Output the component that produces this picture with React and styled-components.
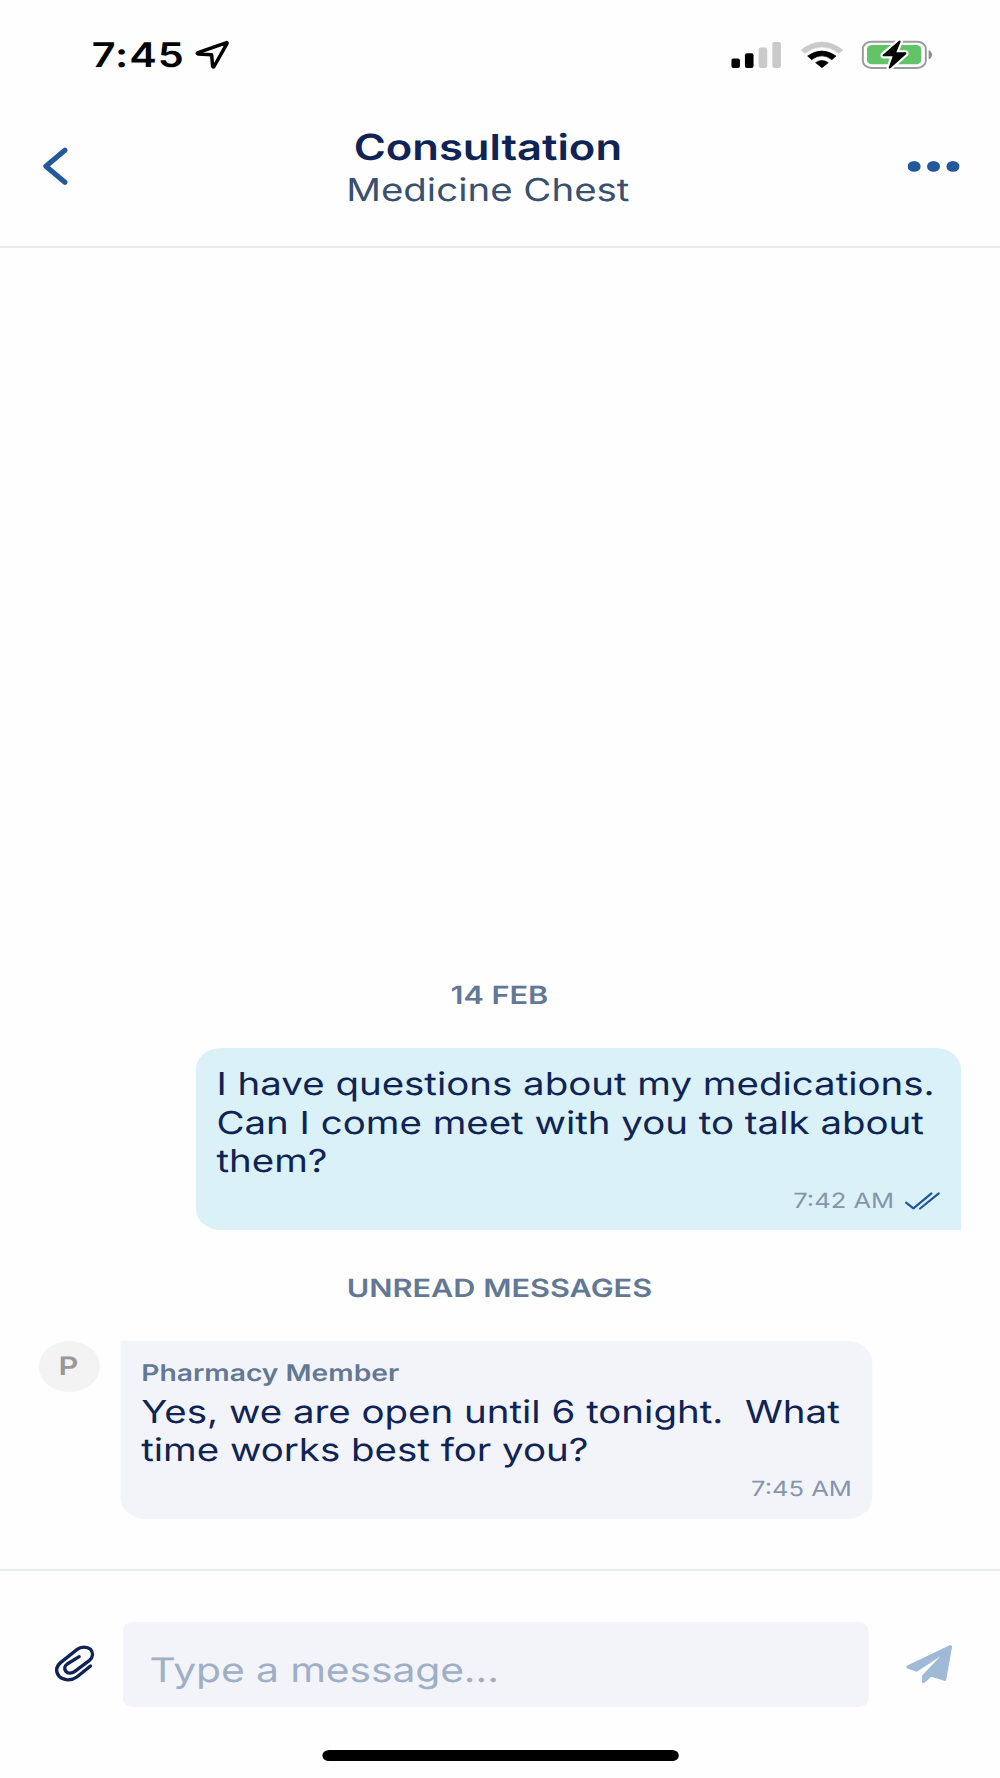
import React from "react";
import styled, { createGlobalStyle } from "styled-components";

/* The screen is laid out on an 822px wide phone canvas and widened to fill the 1000px viewport. */
const CANVAS = 822;
const STRETCH = 1000 / CANVAS;

const color = {
  page: "#fefefe",
  navy: "#0f2454",
  slate: "#3a506f",
  muted: "#627894",
  faint: "#8595ae",
  blue: "#23599b",
  line: "#e8edf5",
  field: "#f3f4f9",
  sent: "#daf1f7",
};

const Global = createGlobalStyle`
  *, *::before, *::after { box-sizing: border-box; }
  html, body { margin: 0; padding: 0; background: ${color.page}; overflow: hidden; }
`;

const Viewport = styled.div`
  width: 1000px;
  height: 1778px;
  overflow: hidden;
  background: ${color.page};
`;

const Screen = styled.div`
  display: flex;
  flex-direction: column;
  width: ${CANVAS}px;
  height: 1778px;
  transform: scaleX(${STRETCH});
  transform-origin: 0 0;
  font-family: Inter, "Liberation Sans", sans-serif;
  text-rendering: geometricPrecision;
  color: ${color.navy};
`;

const StatusBar = styled.div`
  display: flex;
  align-items: center;
  justify-content: space-between;
  height: 110px;
  padding: 0 55.5px 0 75.4px;
  color: #000;
`;

const StatusGroup = styled.div`
  display: flex;
  align-items: center;
  gap: ${(p) => p.$gap}px;
`;

const Clock = styled.span`
  padding-top: 2px;
  font-size: 34px;
  font-weight: 600;
  line-height: 40px;
  letter-spacing: 0.75px;
`;

const Glyph = styled.svg`
  display: block;
  flex: none;
  width: ${(p) => p.$w / STRETCH}px;
  height: ${(p) => p.$h}px;
`;

const Header = styled.header`
  display: grid;
  grid-template-columns: 60px 1fr 80px;
  align-items: start;
  height: 138px;
  padding: 16px 33px 0 35px;
  border-bottom: 2px solid ${color.line};
`;

const IconButton = styled.button`
  display: flex;
  align-items: center;
  justify-content: ${(p) => p.$align || "center"};
  height: ${(p) => p.$h}px;
  padding: 0;
  border: 0;
  background: none;
`;

const Titles = styled.div`
  display: flex;
  flex-direction: column;
  align-items: center;
  margin-right: 2px;
`;

const Title = styled.h1`
  margin: 0;
  font-size: 35.8px;
  font-weight: 600;
  line-height: 42.6px;
`;

const Subtitle = styled.div`
  font-size: 31.6px;
  line-height: 42.6px;
  color: ${color.slate};
`;

const Chat = styled.main`
  flex: 1;
  display: flex;
  flex-direction: column;
  justify-content: flex-end;
  padding: 0 31.8px 50px 32px;
`;

const Divider = styled.div`
  align-self: center;
  margin: ${(p) => p.$top}px 1.2px ${(p) => p.$bottom}px 0;
  font-size: 25.2px;
  font-weight: 600;
  line-height: 30px;
  color: ${color.muted};
`;

const IncomingRow = styled.div`
  display: flex;
  align-items: flex-start;
  gap: 17.1px;
`;

const Avatar = styled.div`
  display: flex;
  align-items: center;
  justify-content: center;
  flex: none;
  width: 50.4px;
  height: 50.4px;
  padding: 0 2px 1px 0;
  border-radius: 50%;
  background: #f3f3f3;
  font-size: 25.3px;
  font-weight: 600;
  color: #989898;
`;

const Bubble = styled.article`
  display: flex;
  flex-direction: column;
  align-self: ${(p) => (p.$sent ? "flex-end" : "auto")};
  width: ${(p) => (p.$sent ? 628.9 : 618)}px;
  height: ${(p) => (p.$sent ? 182.3 : 177.7)}px;
  padding: 17.6px 17.2px 0 16.6px;
  border-radius: ${(p) => (p.$sent ? "21px 21px 0 21px" : "0 21px 21px 21px")};
  background: ${(p) => (p.$sent ? color.sent : color.field)};
`;

const Sender = styled.div`
  margin-bottom: 6px;
  font-size: 23.2px;
  font-weight: 600;
  line-height: 28px;
  color: ${color.muted};
`;

const Message = styled.p`
  margin: 0;
  font-size: 31.6px;
  line-height: 38.4px;
  white-space: pre;
`;

const Meta = styled.div`
  display: flex;
  align-items: center;
  justify-content: flex-end;
  gap: 9.3px;
  margin-top: ${(p) => p.$top}px;
  font-size: 21px;
  line-height: 26px;
  color: ${color.faint};
`;

const Composer = styled.footer`
  display: grid;
  grid-template-columns: 79.8px 613.2px 1fr;
  align-items: start;
  height: 181px;
  padding: 50.6px 10px 0 21.5px;
  border-top: 2px solid ${color.line};
`;

const Field = styled.input`
  width: 613.2px;
  height: 85.2px;
  padding: 13px 22px 0 21.6px;
  border: 0;
  border-radius: 8.5px;
  outline: none;
  background: ${color.field};
  font: 400 33.6px Inter, "Liberation Sans", sans-serif;
  letter-spacing: -0.1px;
  text-rendering: geometricPrecision;
  color: ${color.navy};
  &::placeholder { color: #9eafc6; opacity: 1; }
`;

const HomeBar = styled.div`
  align-self: center;
  width: 292.8px;
  height: 11px;
  margin: 0 0 17px 0.6px;
  border-radius: 5.5px;
  background: #000;
`;

function LocationIcon() {
  return (
    <Glyph $w={36} $h={30} viewBox="376 62 108 90" preserveAspectRatio="none">
      <path d="M472 70 L386 100 Q381 102 386 104 L427 106 L430 141 Q432 145 435 140 L473 73 Q474 69 472 70Z" fill="none" stroke="#000" strokeWidth="10.5" strokeLinejoin="round" />
    </Glyph>
  );
}

function SignalIcon() {
  return (
    <Glyph $w={50} $h={28} viewBox="731.5 40.5 50 28" preserveAspectRatio="none">
      <rect x="731.7" y="58" width="8.6" height="9.6" rx="2" />
      <rect x="745.3" y="52.7" width="8.6" height="14.9" rx="2" />
      <rect x="759" y="47" width="8.6" height="20.6" rx="2" fill="#cacaca" />
      <rect x="772.7" y="41.5" width="8.6" height="26.1" rx="2" fill="#cacaca" />
    </Glyph>
  );
}

function WifiIcon() {
  return (
    <Glyph $w={44} $h={28} viewBox="268 61 132 84" preserveAspectRatio="none">
      <path d="M273 88 Q336 40 399 88 L387 98 Q336 60 285 98Z" fill="#cacaca" stroke="#cacaca" strokeWidth="1.5" strokeLinejoin="round" />
      <path d="M293 106 Q336 76 378 106 L366 117 Q336 94 305 117Z" stroke="#000" strokeWidth="2" strokeLinejoin="round" />
      <path d="M317 126 Q336 113 355 126 L336 141Z" stroke="#000" strokeWidth="2" strokeLinejoin="round" />
    </Glyph>
  );
}

function BatteryIcon() {
  return (
    <Glyph $w={71} $h={30} viewBox="455 60 213 90" preserveAspectRatio="none">
      <rect x="459.5" y="65" width="189" height="79" rx="26" ry="22" fill="#fefefe" stroke="#9c9c9c" strokeWidth="6" />
      <rect x="472" y="75" width="163" height="58" rx="15" ry="13" fill="#62c466" />
      <path d="M657 90 Q667 95 667 104 Q667 113 657 118Z" fill="#8c8c8c" />
      <path d="M568 62 L519 105 Q518 109 522 109 L549 109 L537 143 Q538 148 543 144 L590 102 Q592 97 587 97 L560 97 L573 65 Q572 60 568 62Z" fill="#000" stroke="#fefefe" strokeWidth="13" strokeLinejoin="round" paintOrder="stroke" />
    </Glyph>
  );
}

function BackIcon() {
  return (
    <Glyph $w={26} $h={40} viewBox="70 78 78 120" preserveAspectRatio="none">
      <path d="M137 90.5 L80 138.5 L137 187" fill="none" stroke={color.blue} strokeWidth="15.5" strokeLinecap="round" strokeLinejoin="round" />
    </Glyph>
  );
}

function MoreIcon() {
  return (
    <Glyph $w={52} $h={12} viewBox="0 0 52 12" preserveAspectRatio="none">
      {[6.6, 26, 45.4].map((x) => (
        <ellipse key={x} cx={x} cy="6.4" rx="6.5" ry="5.4" fill={color.blue} />
      ))}
    </Glyph>
  );
}

function ReadIcon() {
  return (
    <Glyph $w={35} $h={18} viewBox="977 486 105 54" preserveAspectRatio="none" overflow="visible">
      <path d="M980 515 L1002 532 L1056 487 M1022 532.5 L1078 487" fill="none" stroke="#1f559b" strokeWidth="6.5" strokeLinecap="round" strokeLinejoin="round" />
    </Glyph>
  );
}

function ClipIcon() {
  return (
    <Glyph $w={42} $h={38} viewBox="100 134 126 114" preserveAspectRatio="none">
      <path d="M211 197 L170 230 C154 242 130 241 117 228 C105 214 107 198 122 186 L171 147 C182 138 201 138 211 147 C220 157 219 171 208 180 L163 214 C155 220 143 220 137 213 C131 206 133 197 141 191 L177 169" fill="none" stroke={color.navy} strokeWidth="10" strokeLinecap="round" strokeLinejoin="round" />
    </Glyph>
  );
}

function SendIcon() {
  return (
    <Glyph $w={48} $h={40} viewBox="912 132 144 120" preserveAspectRatio="none">
      <path d="M918 199 L1048 137 L1051 140 L1033 241 L990 228 L969 247 L965 247 L965 227 L1031 158 L947 213 L918 203Z" fill="#9fbad6" stroke="#9fbad6" strokeWidth="4" strokeLinejoin="round" />
    </Glyph>
  );
}

export default function App() {
  return (
    <Viewport>
      <Global />
      <Screen>
        <StatusBar>
          <StatusGroup $gap={8.6}>
            <Clock>7:45</Clock>
            <LocationIcon />
          </StatusGroup>
          <StatusGroup $gap={15}>
            <SignalIcon />
            <WifiIcon />
            <BatteryIcon />
          </StatusGroup>
        </StatusBar>

        <Header>
          <IconButton $h={80} $align="flex-start" aria-label="Back">
            <BackIcon />
          </IconButton>
          <Titles>
            <Title>Consultation</Title>
            <Subtitle>Medicine Chest</Subtitle>
          </Titles>
          <IconButton $h={80} $align="flex-end" aria-label="More options">
            <MoreIcon />
          </IconButton>
        </Header>

        <Chat>
          <Divider $top={0} $bottom={37.2}>14 FEB</Divider>
          <Bubble $sent>
            <Message>{"I have questions about my medications.\nCan I come meet with you to talk about\nthem?"}</Message>
            <Meta $top={8.1}>
              7:42 AM
              <ReadIcon />
            </Meta>
          </Bubble>
          <Divider $top={43.4} $bottom={37.8}>UNREAD MESSAGES</Divider>
          <IncomingRow>
            <Avatar>P</Avatar>
            <Bubble>
              <Sender>Pharmacy Member</Sender>
              <Message>{"Yes, we are open until 6 tonight.\u00a0 What\ntime works best for you?"}</Message>
              <Meta $top={7}>7:45 AM</Meta>
            </Bubble>
          </IncomingRow>
        </Chat>

        <Composer>
          <IconButton $h={85} aria-label="Attach file">
            <ClipIcon />
          </IconButton>
          <Field placeholder="Type a message..." aria-label="Message" />
          <IconButton $h={85} aria-label="Send">
            <SendIcon />
          </IconButton>
        </Composer>
        <HomeBar />
      </Screen>
    </Viewport>
  );
}
